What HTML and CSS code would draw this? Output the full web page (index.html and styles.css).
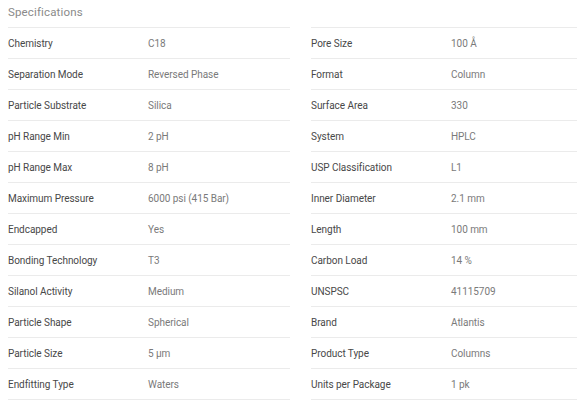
FILE: index.html
```html
<!DOCTYPE html>
<html>
<head>
<meta charset="utf-8">
<link rel="stylesheet" href="styles.css">
</head>
<body>
<div class="specs">
  <div class="title-row">
    <h2 class="title">Specifications</h2>
    <div class="title-spacer"></div>
  </div>
  <div class="grid">
    <div class="col">
      <div class="row"><span class="label">Chemistry</span><span class="value">C18</span></div>
      <div class="row"><span class="label">Separation Mode</span><span class="value">Reversed Phase</span></div>
      <div class="row"><span class="label">Particle Substrate</span><span class="value">Silica</span></div>
      <div class="row"><span class="label">pH Range Min</span><span class="value">2 pH</span></div>
      <div class="row"><span class="label">pH Range Max</span><span class="value">8 pH</span></div>
      <div class="row"><span class="label">Maximum Pressure</span><span class="value">6000 psi (415 Bar)</span></div>
      <div class="row"><span class="label">Endcapped</span><span class="value">Yes</span></div>
      <div class="row"><span class="label">Bonding Technology</span><span class="value">T3</span></div>
      <div class="row"><span class="label">Silanol Activity</span><span class="value">Medium</span></div>
      <div class="row"><span class="label">Particle Shape</span><span class="value">Spherical</span></div>
      <div class="row"><span class="label">Particle Size</span><span class="value">5 µm</span></div>
      <div class="row"><span class="label">Endfitting Type</span><span class="value">Waters</span></div>
    </div>
    <div class="col">
      <div class="row"><span class="label">Pore Size</span><span class="value">100 Å</span></div>
      <div class="row"><span class="label">Format</span><span class="value">Column</span></div>
      <div class="row"><span class="label">Surface Area</span><span class="value">330</span></div>
      <div class="row"><span class="label">System</span><span class="value">HPLC</span></div>
      <div class="row"><span class="label">USP Classification</span><span class="value">L1</span></div>
      <div class="row"><span class="label">Inner Diameter</span><span class="value">2.1 mm</span></div>
      <div class="row"><span class="label">Length</span><span class="value">100 mm</span></div>
      <div class="row"><span class="label">Carbon Load</span><span class="value">14 %</span></div>
      <div class="row"><span class="label">UNSPSC</span><span class="value">41115709</span></div>
      <div class="row"><span class="label">Brand</span><span class="value">Atlantis</span></div>
      <div class="row"><span class="label">Product Type</span><span class="value">Columns</span></div>
      <div class="row"><span class="label">Units per Package</span><span class="value">1 pk</span></div>
    </div>
  </div>
</div>
</body>
</html>
```

FILE: styles.css
```css
html, body {
  margin: 0;
  padding: 0;
  background: #fff;
  overflow: hidden;
}
body {
  font-family: Roboto, "Liberation Sans", Arial, sans-serif;
}
.specs {
  padding-left: 8px;
}
.title-row {
  display: grid;
  grid-template-columns: 282px 1fr;
  column-gap: 21px;
}
.title {
  margin: 0;
  font-weight: 400;
  font-size: 11.5px;
  letter-spacing: 0.15px;
  line-height: 22px;
  padding-top: 1px;
  padding-bottom: 4px;
  color: #8a8a8a;
  border-bottom: 1px solid #ebebeb;
}
.title-spacer {
  border-bottom: 1px solid #ebebeb;
}
.grid {
  display: grid;
  grid-template-columns: 282px 1fr;
  column-gap: 21px;
}
.col {
  display: flex;
  flex-direction: column;
}
.row {
  display: flex;
  align-items: center;
  height: 30px;
  border-bottom: 1px solid #ebebeb;
  font-size: 10px;
  letter-spacing: -0.05px;
}
.label {
  width: 140px;
  color: #484848;
}
.value {
  color: #7a7a7a;
}
```
